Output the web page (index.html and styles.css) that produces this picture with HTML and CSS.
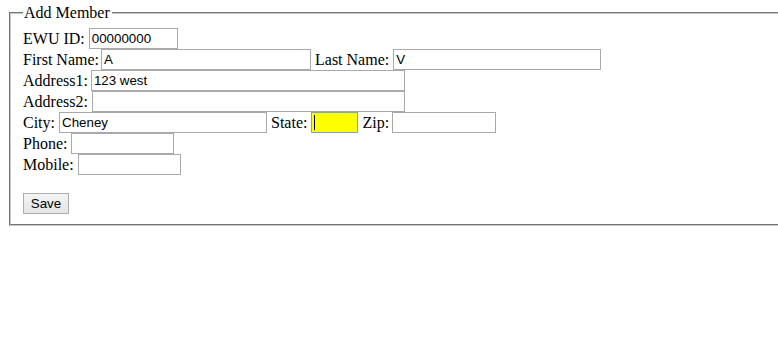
FILE: index.html
```html
<!DOCTYPE html>
<html lang="en">
<head>
    <meta charset="UTF-8">
    <title>Add Member</title>
    <link rel="stylesheet" href="styles.css">
</head>
<body>
    <form class="member-form">
        <fieldset>
            <legend>Add Member</legend>
            <div class="row">
                <label for="ewu-id">EWU ID:</label>
                <input type="text" id="ewu-id" class="w-id" value="00000000">
            </div>
            <div class="row">
                <label for="first-name" class="tight">First Name:</label>
                <input type="text" id="first-name" class="w-name" value="A">
                <label for="last-name">Last Name:</label>
                <input type="text" id="last-name" class="w-name2" value="V">
            </div>
            <div class="row">
                <label for="address1" class="tight1">Address1:</label>
                <input type="text" id="address1" class="w-addr" value="123 west">
            </div>
            <div class="row">
                <label for="address2">Address2:</label>
                <input type="text" id="address2" class="w-addr2" value="">
            </div>
            <div class="row">
                <label for="city">City:</label>
                <input type="text" id="city" class="w-name2" value="Cheney">
                <label for="state">State:</label>
                <span class="state-wrap">
                    <input type="text" id="state" class="w-state" value="">
                    <span class="caret"></span>
                </span>
                <label for="zip" class="tight1">Zip:</label>
                <input type="text" id="zip" class="w-short" value="">
            </div>
            <div class="row">
                <label for="phone">Phone:</label>
                <input type="text" id="phone" class="w-phone" value="">
            </div>
            <div class="row">
                <label for="mobile">Mobile:</label>
                <input type="text" id="mobile" class="w-phone" value="">
            </div>
            <div class="row actions">
                <button type="button" class="save-btn">Save</button>
            </div>
        </fieldset>
    </form>
</body>
</html>
```

FILE: styles.css
```css
html {
    overflow: hidden;
}

body {
    margin: 4px 0 0 9px;
    font-family: 'Liberation Serif', 'Times New Roman', serif;
    font-size: 16px;
    color: #000;
    background: #fff;
}

fieldset {
    width: 820px;
    margin: 0;
    padding: 6px 12px 10px 12px;
    border: 2px groove #c8c8c8;
}

legend {
    padding: 0 2px 0 1px;
    line-height: 18px;
}

.row {
    display: flex;
    align-items: center;
    gap: 4px;
    height: 21px;
}

.row label {
    white-space: nowrap;
}

.row .tight {
    margin-right: -2px;
}

.row .tight1 {
    margin-right: -1px;
}

.row input {
    box-sizing: border-box;
    height: 21px;
    margin: 0;
    padding: 1px 2px;
    border: 1px solid #a9a9a9;
    font-family: 'Liberation Sans', Arial, sans-serif;
    font-size: 13.33px;
    color: #000;
    background: #fff;
}

.w-id { width: 89px; }
.w-name { width: 210px; }
.w-name2 { width: 208px; }
.w-addr { width: 314px; }
.w-addr2 { width: 313px; }
.w-state { width: 47px; }
.w-short { width: 104px; }
.w-phone { width: 103px; }

.state-wrap {
    position: relative;
    display: inline-flex;
}

.row .w-state {
    background: #ffff00;
    border: 1px solid #7da2ce;
    outline: none;
}

.caret {
    position: absolute;
    left: 3px;
    top: 3px;
    width: 1px;
    height: 15px;
    background: #000;
}

.actions {
    margin-top: 18px;
}

.save-btn {
    box-sizing: border-box;
    height: 21px;
    width: 46px;
    padding: 0;
    border: 1px solid #adadad;
    background: linear-gradient(#f4f4f4, #e4e4e4);
    font-family: 'Liberation Sans', Arial, sans-serif;
    font-size: 13.33px;
    color: #000;
}
```
